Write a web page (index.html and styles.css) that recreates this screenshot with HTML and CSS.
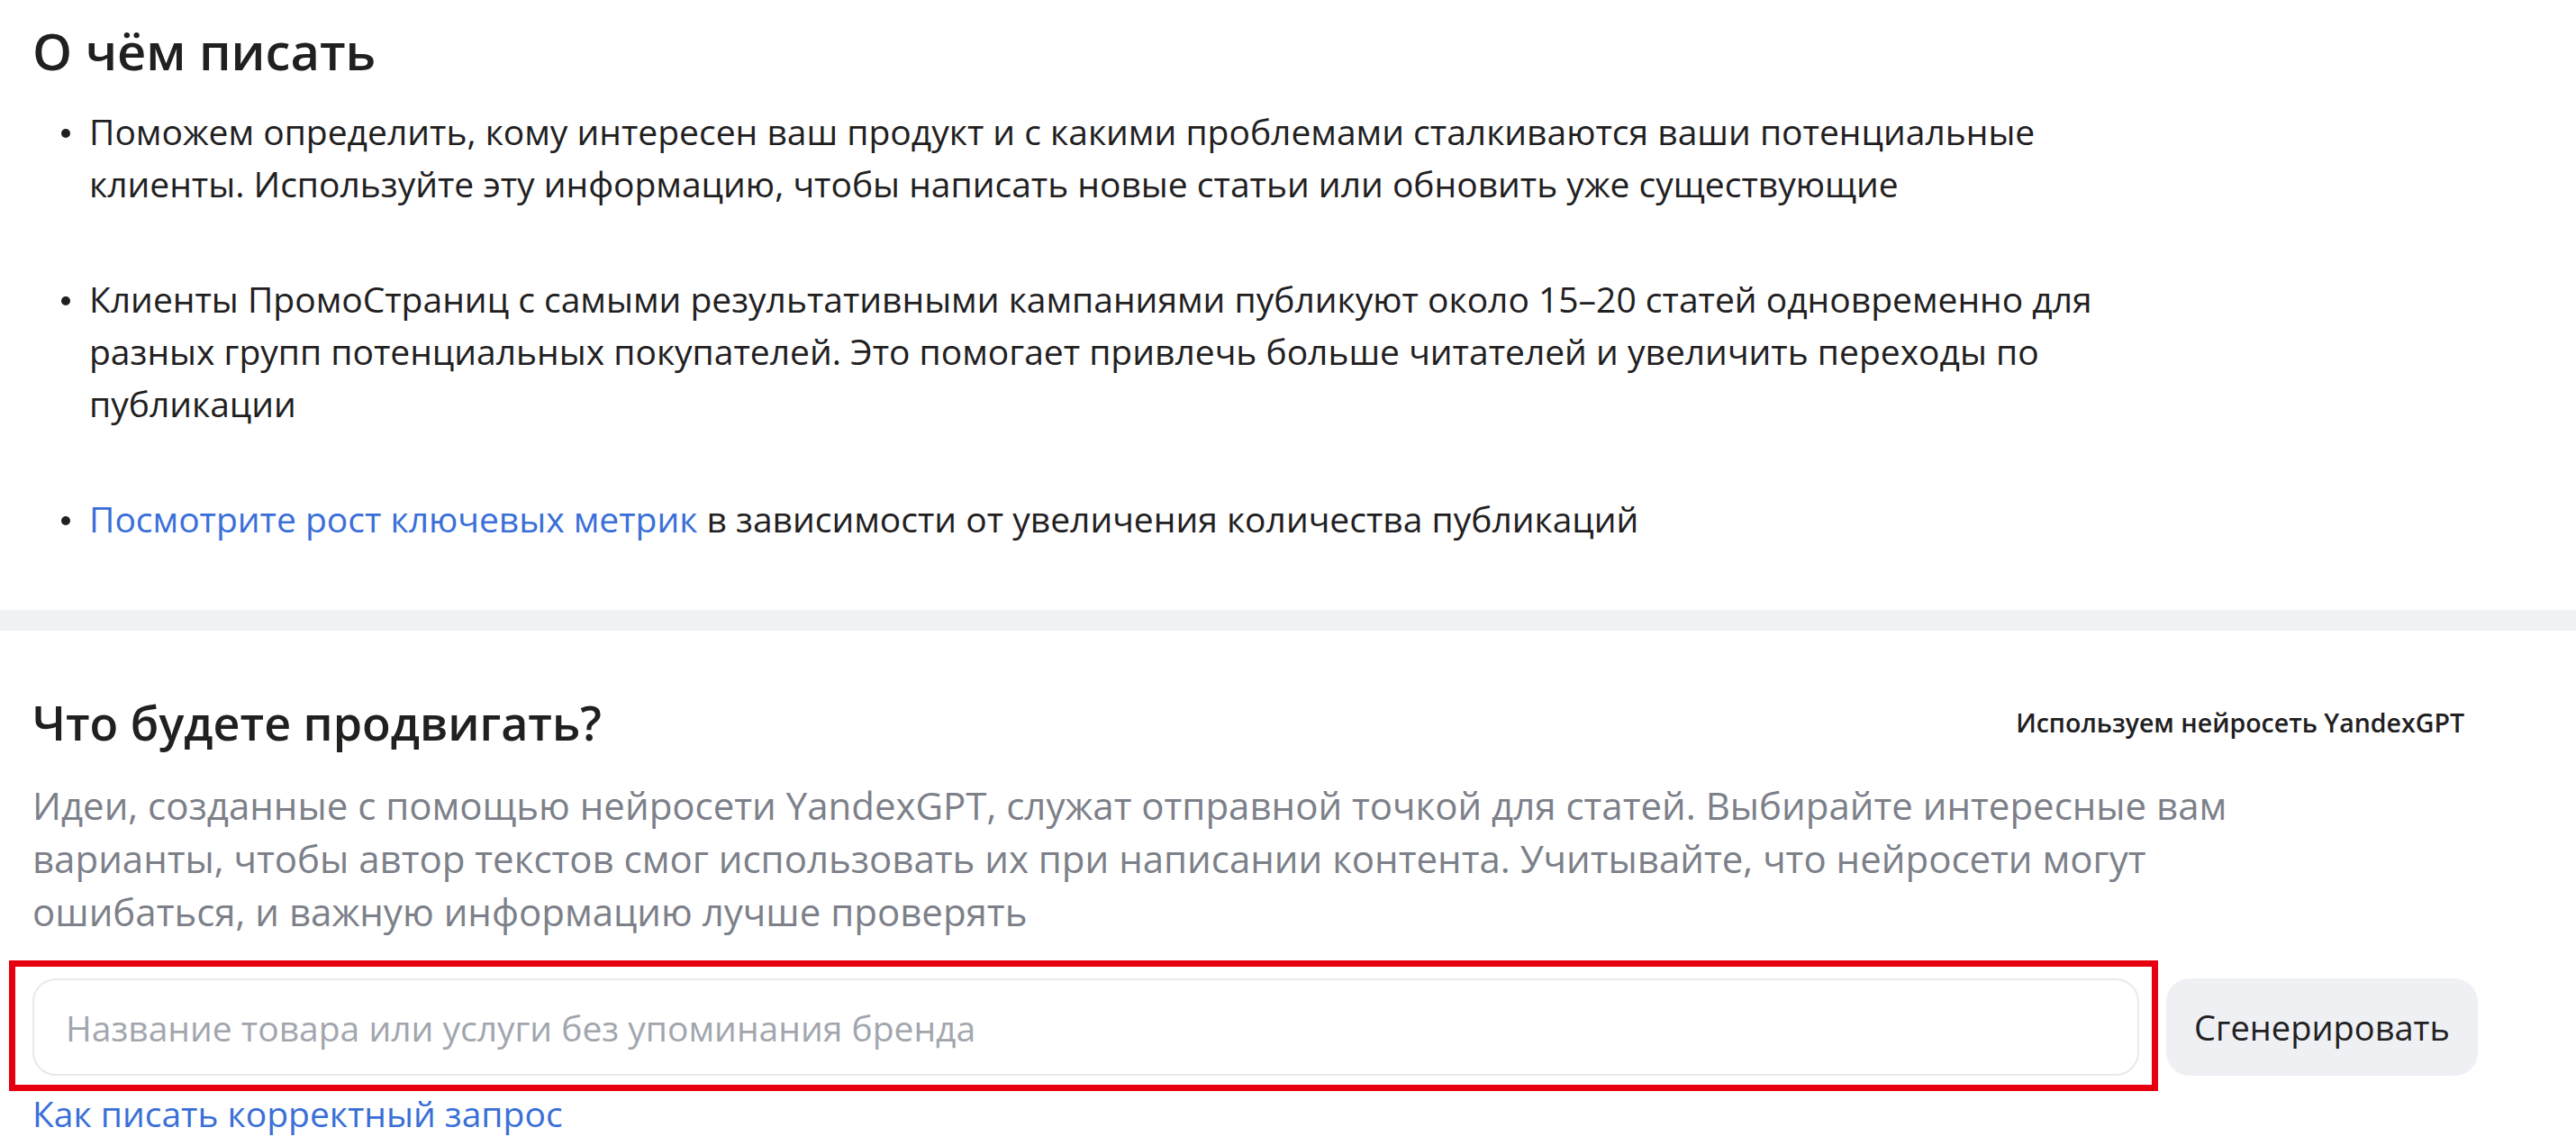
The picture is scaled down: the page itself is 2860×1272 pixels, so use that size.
FILE: index.html
```html
<!DOCTYPE html>
<html lang="ru">
<head>
<meta charset="utf-8">
<title>О чём писать</title>
<link rel="stylesheet" href="styles.css">
</head>
<body>
<main class="page">
  <section class="about">
    <h1 class="about__title">О чём писать</h1>
    <ul class="tips">
      <li class="tips__item"><span class="tips__text">Поможем определить, кому интересен ваш продукт и с какими проблемами сталкиваются ваши потенциальные клиенты. Используйте эту информацию, чтобы написать новые статьи или обновить уже существующие</span></li>
      <li class="tips__item"><span class="tips__text">Клиенты ПромоСтраниц с самыми результативными кампаниями публикуют около 15–20 статей одновременно для разных групп потенциальных покупателей. Это помогает привлечь больше читателей и увеличить переходы по публикации</span></li>
      <li class="tips__item"><span class="tips__text"><a class="link" href="#">Посмотрите рост ключевых метрик</a> в зависимости от увеличения количества публикаций</span></li>
    </ul>
  </section>
  <div class="divider"></div>
  <section class="promo">
    <div class="promo__head">
      <h2 class="promo__title">Что будете продвигать?</h2>
      <span class="promo__badge">Используем нейросеть YandexGPT</span>
    </div>
    <p class="promo__desc">Идеи, созданные с помощью нейросети YandexGPT, служат отправной точкой для статей. Выбирайте интересные вам варианты, чтобы автор текстов смог использовать их при написании контента. Учитывайте, что нейросети могут ошибаться, и важную информацию лучше проверять</p>
    <div class="promo__form">
      <div class="field">
        <input class="field__input" type="text" placeholder="Название товара или услуги без упоминания бренда">
      </div>
      <button class="promo__btn" type="button">Сгенерировать</button>
    </div>
    <a class="link promo__help" href="#">Как писать корректный запрос</a>
  </section>
</main>
</body>
</html>
```

FILE: styles.css
```css
* { box-sizing: border-box; }

body {
  margin: 0;
  background: #ffffff;
  font-family: "Open Sans", "Noto Sans", sans-serif;
  color: #21201f;
}

.link {
  color: #3a6fd8;
  text-decoration: none;
}

.about {
  padding: 24px 480px 72px 36px;
}

.about__title {
  margin: 0;
  font-size: 56px;
  line-height: 64px;
  font-weight: 600;
}

.tips {
  list-style: none;
  margin: 29px 0 0;
  padding: 0 0 0 26px;
  font-size: 39px;
  line-height: 58px;
}

.tips__item {
  display: flex;
}

.tips__item + .tips__item {
  margin-top: 70px;
}

.tips__item::before {
  content: "";
  flex: none;
  width: 10px;
  height: 10px;
  border-radius: 50%;
  background: #21201f;
  margin: 26px 21px 0 6px;
}

.divider {
  height: 23px;
  background: #eff1f4;
}

.promo {
  padding: 72px 109px 0 36px;
}

.promo__head {
  display: flex;
  align-items: center;
  justify-content: space-between;
  height: 60px;
}

.promo__title {
  margin: 0;
  font-size: 52px;
  line-height: 60px;
  font-weight: 600;
}

.promo__badge {
  font-size: 28.5px;
  font-weight: 600;
  margin-right: 15px;
}

.promo__desc {
  margin: 32px 200px 0 0;
  font-size: 42px;
  line-height: 59px;
  color: #7c8089;
}

.promo__form {
  display: flex;
  gap: 30px;
  margin-top: 45px;
}

.field {
  position: relative;
  flex: 1;
}

.field::after {
  content: "";
  position: absolute;
  top: -20px;
  left: -26px;
  right: -21px;
  bottom: -17px;
  border: 7px solid #e6000f;
  pointer-events: none;
}

.field__input {
  display: block;
  width: 100%;
  height: 108px;
  border: 2px solid #e7e9ec;
  border-radius: 26px;
  padding: 0 35px;
  font-family: "Open Sans", "Noto Sans", sans-serif;
  font-size: 39px;
  color: #21201f;
  background: #ffffff;
  outline: none;
}

.field__input::placeholder {
  color: #a1a6ae;
}

.promo__btn {
  flex: none;
  width: 346px;
  height: 108px;
  border: 0;
  border-radius: 26px;
  background: #eef0f4;
  font-family: "Open Sans", "Noto Sans", sans-serif;
  font-size: 38px;
  color: #21201f;
}

.promo__help {
  display: inline-block;
  margin-top: 17px;
  font-size: 39px;
  line-height: 50px;
}
```
